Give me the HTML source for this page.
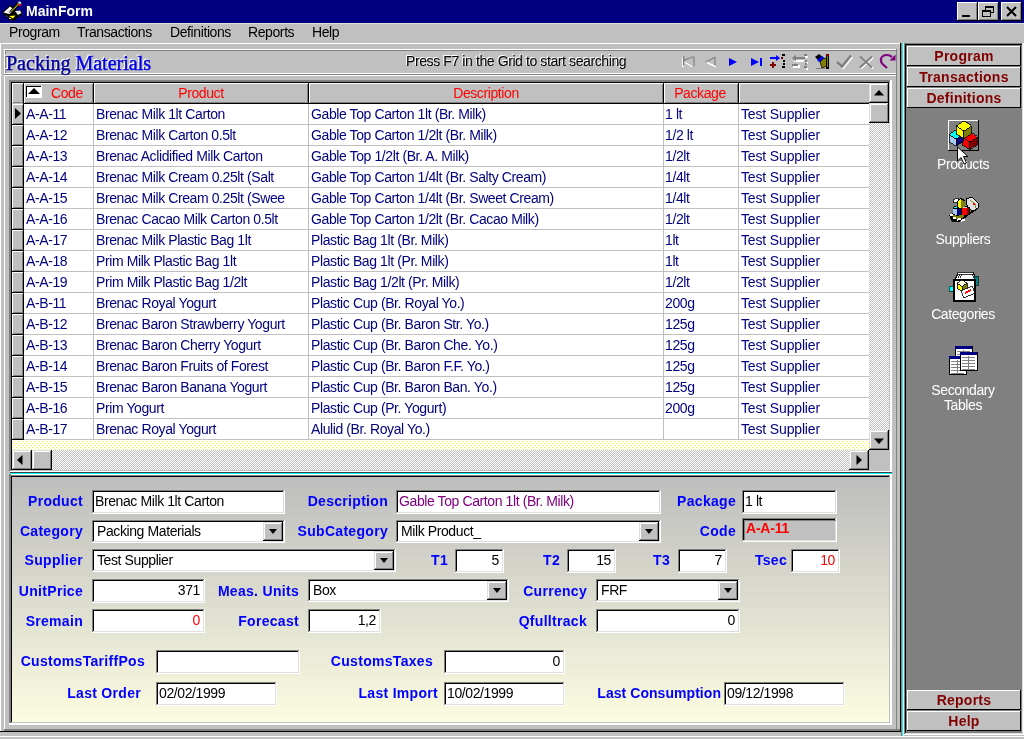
<!DOCTYPE html>
<html><head><meta charset="utf-8"><style>
html,body{margin:0;padding:0;width:1024px;height:739px;overflow:hidden;background:#c0c0c0;-webkit-font-smoothing:antialiased}
body>div{position:absolute}
.t{position:absolute;white-space:nowrap;font-family:"Liberation Sans",sans-serif;will-change:transform}
</style></head><body>
<div style="left:0px;top:0px;width:1024px;height:739px;background:#c0c0c0;"></div>
<div style="left:0px;top:0px;width:1024px;height:23px;background:#000080;"></div>
<div class="t " style="left:26px;top:4px;font-size:14px;line-height:14px;font-weight:bold;color:#fff;letter-spacing:0px;font-family:'Liberation Sans';">MainForm</div>
<div style="left:957px;top:2px;width:21px;height:19px;background:#c0c0c0;"></div>
<div style="left:957px;top:2px;width:21px;height:1px;background:#fff;"></div>
<div style="left:957px;top:2px;width:1px;height:19px;background:#fff;"></div>
<div style="left:957px;top:20px;width:21px;height:1px;background:#000;"></div>
<div style="left:977px;top:2px;width:1px;height:19px;background:#000;"></div>
<div style="left:958px;top:3px;width:19px;height:1px;background:#c0c0c0;"></div>
<div style="left:958px;top:3px;width:1px;height:17px;background:#c0c0c0;"></div>
<div style="left:958px;top:19px;width:19px;height:1px;background:#808080;"></div>
<div style="left:976px;top:3px;width:1px;height:17px;background:#808080;"></div>
<div style="left:978px;top:2px;width:21px;height:19px;background:#c0c0c0;"></div>
<div style="left:978px;top:2px;width:21px;height:1px;background:#fff;"></div>
<div style="left:978px;top:2px;width:1px;height:19px;background:#fff;"></div>
<div style="left:978px;top:20px;width:21px;height:1px;background:#000;"></div>
<div style="left:998px;top:2px;width:1px;height:19px;background:#000;"></div>
<div style="left:979px;top:3px;width:19px;height:1px;background:#c0c0c0;"></div>
<div style="left:979px;top:3px;width:1px;height:17px;background:#c0c0c0;"></div>
<div style="left:979px;top:19px;width:19px;height:1px;background:#808080;"></div>
<div style="left:997px;top:3px;width:1px;height:17px;background:#808080;"></div>
<div style="left:1001px;top:2px;width:21px;height:19px;background:#c0c0c0;"></div>
<div style="left:1001px;top:2px;width:21px;height:1px;background:#fff;"></div>
<div style="left:1001px;top:2px;width:1px;height:19px;background:#fff;"></div>
<div style="left:1001px;top:20px;width:21px;height:1px;background:#000;"></div>
<div style="left:1021px;top:2px;width:1px;height:19px;background:#000;"></div>
<div style="left:1002px;top:3px;width:19px;height:1px;background:#c0c0c0;"></div>
<div style="left:1002px;top:3px;width:1px;height:17px;background:#c0c0c0;"></div>
<div style="left:1002px;top:19px;width:19px;height:1px;background:#808080;"></div>
<div style="left:1020px;top:3px;width:1px;height:17px;background:#808080;"></div>
<div style="left:962px;top:15px;width:8px;height:2px;background:#000;"></div>
<div style="left:985px;top:6px;width:8px;height:6px;border:1px solid #000;border-top-width:2px;box-sizing:border-box;width:9px;height:7px"></div>
<div style="left:982px;top:10px;width:9px;height:7px;border:1px solid #000;border-top-width:2px;box-sizing:border-box;background:#c0c0c0"></div>
<svg style="position:absolute;left:1006px;top:6px" width="12" height="11" viewBox="0 0 12 11" shape-rendering="crispEdges"><path d="M1 1 L10 10 M10 1 L1 10" stroke="#000" stroke-width="2" shape-rendering="auto"/></svg>
<div style="left:0px;top:23px;width:1024px;height:1px;background:#dfdfdf;"></div>
<div class="t " style="left:9px;top:25px;font-size:14px;line-height:14px;font-weight:normal;color:#000;letter-spacing:-0.4px;font-family:'Liberation Sans';">Program</div>
<div class="t " style="left:77px;top:25px;font-size:14px;line-height:14px;font-weight:normal;color:#000;letter-spacing:-0.4px;font-family:'Liberation Sans';">Transactions</div>
<div class="t " style="left:170px;top:25px;font-size:14px;line-height:14px;font-weight:normal;color:#000;letter-spacing:-0.4px;font-family:'Liberation Sans';">Definitions</div>
<div class="t " style="left:248px;top:25px;font-size:14px;line-height:14px;font-weight:normal;color:#000;letter-spacing:-0.4px;font-family:'Liberation Sans';">Reports</div>
<div class="t " style="left:312px;top:25px;font-size:14px;line-height:14px;font-weight:normal;color:#000;letter-spacing:-0.4px;font-family:'Liberation Sans';">Help</div>
<div style="left:0px;top:43px;width:900px;height:1px;background:#fff;"></div>
<div style="left:0px;top:43px;width:1px;height:688px;background:#fff;"></div>
<div style="left:4px;top:49px;width:1px;height:680px;background:#fff;"></div>
<div style="left:4px;top:49px;width:893px;height:1px;background:#fff;"></div>
<div style="left:5px;top:50px;width:891px;height:1px;background:#808080;"></div>
<div style="left:5px;top:50px;width:1px;height:23px;background:#808080;"></div>
<div style="left:4px;top:73px;width:893px;height:1px;background:#fff;"></div>
<div style="left:4px;top:74px;width:893px;height:1px;background:#808080;"></div>
<div style="left:4px;top:75px;width:892px;height:1px;background:#fff;"></div>
<div style="left:896px;top:49px;width:1px;height:681px;background:#808080;"></div>
<div style="left:4px;top:729px;width:897px;height:1px;background:#808080;"></div>
<div style="left:4px;top:730px;width:897px;height:1px;background:#808080;"></div>
<div style="left:0px;top:731px;width:901px;height:1px;background:#000;"></div>
<div style="left:0px;top:736px;width:1024px;height:1px;background:#fff;"></div>
<div style="left:900px;top:43px;width:1px;height:689px;background:#000;"></div>
<div style="left:901px;top:43px;width:1px;height:693px;background:#808080;"></div>
<div style="left:902px;top:43px;width:1px;height:693px;background:#00ffff;"></div>
<div style="left:903px;top:43px;width:1px;height:693px;background:#fff;"></div>
<div class="t" style="left:5px;top:51px;font-family:'Liberation Serif';font-size:20px;line-height:22px;letter-spacing:0px;color:#fff;-webkit-text-stroke:0.4px #fff">Packing Materials</div>
<div class="t" style="left:6px;top:52px;font-family:'Liberation Serif';font-size:20px;line-height:22px;letter-spacing:0px;"><span style="color:#00009c;-webkit-text-stroke:0.45px #00009c">Packing </span><span style="color:#0000e4;-webkit-text-stroke:0.45px #0000e4">Materials</span></div>
<div class="t " style="left:406px;top:54px;font-size:14px;line-height:14px;font-weight:normal;color:#000;letter-spacing:-0.4px;font-family:'Liberation Sans';text-shadow:-1px -1px 0 #fff;">Press F7 in the Grid to start searching</div>
<div style="left:9px;top:80px;width:882px;height:2px;background:#808080;"></div>
<div style="left:9px;top:80px;width:2px;height:391px;background:#808080;"></div>
<div style="left:11px;top:82px;width:878px;height:1px;background:#000;"></div>
<div style="left:11px;top:82px;width:1px;height:388px;background:#000;"></div>
<div style="left:889px;top:82px;width:1px;height:389px;background:#c0c0c0;"></div>
<div style="left:890px;top:80px;width:2px;height:391px;background:#fff;"></div>
<div style="left:11px;top:470px;width:879px;height:1px;background:#c0c0c0;"></div>
<div style="left:12px;top:83px;width:877px;height:387px;background:#fff;"></div>
<div style="left:12px;top:83px;width:857px;height:20px;background:#c0c0c0;"></div>
<div style="left:12px;top:103px;width:857px;height:1px;background:#000;"></div>
<div style="left:12px;top:83px;width:11px;height:357px;background:#c0c0c0;"></div>
<div style="left:23px;top:83px;width:1px;height:357px;background:#000;"></div>
<div style="left:12px;top:104px;width:11px;height:1px;background:#fff;"></div>
<div style="left:12px;top:104px;width:1px;height:20px;background:#fff;"></div>
<div style="left:13px;top:123px;width:10px;height:1px;background:#808080;"></div>
<div style="left:22px;top:105px;width:1px;height:19px;background:#808080;"></div>
<div style="left:12px;top:124px;width:12px;height:1px;background:#000;"></div>
<div style="left:12px;top:125px;width:11px;height:1px;background:#fff;"></div>
<div style="left:12px;top:125px;width:1px;height:20px;background:#fff;"></div>
<div style="left:13px;top:144px;width:10px;height:1px;background:#808080;"></div>
<div style="left:22px;top:126px;width:1px;height:19px;background:#808080;"></div>
<div style="left:12px;top:145px;width:12px;height:1px;background:#000;"></div>
<div style="left:12px;top:146px;width:11px;height:1px;background:#fff;"></div>
<div style="left:12px;top:146px;width:1px;height:20px;background:#fff;"></div>
<div style="left:13px;top:165px;width:10px;height:1px;background:#808080;"></div>
<div style="left:22px;top:147px;width:1px;height:19px;background:#808080;"></div>
<div style="left:12px;top:166px;width:12px;height:1px;background:#000;"></div>
<div style="left:12px;top:167px;width:11px;height:1px;background:#fff;"></div>
<div style="left:12px;top:167px;width:1px;height:20px;background:#fff;"></div>
<div style="left:13px;top:186px;width:10px;height:1px;background:#808080;"></div>
<div style="left:22px;top:168px;width:1px;height:19px;background:#808080;"></div>
<div style="left:12px;top:187px;width:12px;height:1px;background:#000;"></div>
<div style="left:12px;top:188px;width:11px;height:1px;background:#fff;"></div>
<div style="left:12px;top:188px;width:1px;height:20px;background:#fff;"></div>
<div style="left:13px;top:207px;width:10px;height:1px;background:#808080;"></div>
<div style="left:22px;top:189px;width:1px;height:19px;background:#808080;"></div>
<div style="left:12px;top:208px;width:12px;height:1px;background:#000;"></div>
<div style="left:12px;top:209px;width:11px;height:1px;background:#fff;"></div>
<div style="left:12px;top:209px;width:1px;height:20px;background:#fff;"></div>
<div style="left:13px;top:228px;width:10px;height:1px;background:#808080;"></div>
<div style="left:22px;top:210px;width:1px;height:19px;background:#808080;"></div>
<div style="left:12px;top:229px;width:12px;height:1px;background:#000;"></div>
<div style="left:12px;top:230px;width:11px;height:1px;background:#fff;"></div>
<div style="left:12px;top:230px;width:1px;height:20px;background:#fff;"></div>
<div style="left:13px;top:249px;width:10px;height:1px;background:#808080;"></div>
<div style="left:22px;top:231px;width:1px;height:19px;background:#808080;"></div>
<div style="left:12px;top:250px;width:12px;height:1px;background:#000;"></div>
<div style="left:12px;top:251px;width:11px;height:1px;background:#fff;"></div>
<div style="left:12px;top:251px;width:1px;height:20px;background:#fff;"></div>
<div style="left:13px;top:270px;width:10px;height:1px;background:#808080;"></div>
<div style="left:22px;top:252px;width:1px;height:19px;background:#808080;"></div>
<div style="left:12px;top:271px;width:12px;height:1px;background:#000;"></div>
<div style="left:12px;top:272px;width:11px;height:1px;background:#fff;"></div>
<div style="left:12px;top:272px;width:1px;height:20px;background:#fff;"></div>
<div style="left:13px;top:291px;width:10px;height:1px;background:#808080;"></div>
<div style="left:22px;top:273px;width:1px;height:19px;background:#808080;"></div>
<div style="left:12px;top:292px;width:12px;height:1px;background:#000;"></div>
<div style="left:12px;top:293px;width:11px;height:1px;background:#fff;"></div>
<div style="left:12px;top:293px;width:1px;height:20px;background:#fff;"></div>
<div style="left:13px;top:312px;width:10px;height:1px;background:#808080;"></div>
<div style="left:22px;top:294px;width:1px;height:19px;background:#808080;"></div>
<div style="left:12px;top:313px;width:12px;height:1px;background:#000;"></div>
<div style="left:12px;top:314px;width:11px;height:1px;background:#fff;"></div>
<div style="left:12px;top:314px;width:1px;height:20px;background:#fff;"></div>
<div style="left:13px;top:333px;width:10px;height:1px;background:#808080;"></div>
<div style="left:22px;top:315px;width:1px;height:19px;background:#808080;"></div>
<div style="left:12px;top:334px;width:12px;height:1px;background:#000;"></div>
<div style="left:12px;top:335px;width:11px;height:1px;background:#fff;"></div>
<div style="left:12px;top:335px;width:1px;height:20px;background:#fff;"></div>
<div style="left:13px;top:354px;width:10px;height:1px;background:#808080;"></div>
<div style="left:22px;top:336px;width:1px;height:19px;background:#808080;"></div>
<div style="left:12px;top:355px;width:12px;height:1px;background:#000;"></div>
<div style="left:12px;top:356px;width:11px;height:1px;background:#fff;"></div>
<div style="left:12px;top:356px;width:1px;height:20px;background:#fff;"></div>
<div style="left:13px;top:375px;width:10px;height:1px;background:#808080;"></div>
<div style="left:22px;top:357px;width:1px;height:19px;background:#808080;"></div>
<div style="left:12px;top:376px;width:12px;height:1px;background:#000;"></div>
<div style="left:12px;top:377px;width:11px;height:1px;background:#fff;"></div>
<div style="left:12px;top:377px;width:1px;height:20px;background:#fff;"></div>
<div style="left:13px;top:396px;width:10px;height:1px;background:#808080;"></div>
<div style="left:22px;top:378px;width:1px;height:19px;background:#808080;"></div>
<div style="left:12px;top:397px;width:12px;height:1px;background:#000;"></div>
<div style="left:12px;top:398px;width:11px;height:1px;background:#fff;"></div>
<div style="left:12px;top:398px;width:1px;height:20px;background:#fff;"></div>
<div style="left:13px;top:417px;width:10px;height:1px;background:#808080;"></div>
<div style="left:22px;top:399px;width:1px;height:19px;background:#808080;"></div>
<div style="left:12px;top:418px;width:12px;height:1px;background:#000;"></div>
<div style="left:12px;top:419px;width:11px;height:1px;background:#fff;"></div>
<div style="left:12px;top:419px;width:1px;height:20px;background:#fff;"></div>
<div style="left:13px;top:438px;width:10px;height:1px;background:#808080;"></div>
<div style="left:22px;top:420px;width:1px;height:19px;background:#808080;"></div>
<div style="left:12px;top:439px;width:12px;height:1px;background:#000;"></div>
<div style="left:12px;top:83px;width:11px;height:1px;background:#fff;"></div>
<div style="left:12px;top:83px;width:1px;height:20px;background:#fff;"></div>
<div style="left:13px;top:102px;width:10px;height:1px;background:#808080;"></div>
<div style="left:22px;top:84px;width:1px;height:19px;background:#808080;"></div>
<div style="left:24px;top:83px;width:69px;height:1px;background:#fff;"></div>
<div style="left:24px;top:83px;width:1px;height:20px;background:#fff;"></div>
<div style="left:25px;top:102px;width:68px;height:1px;background:#808080;"></div>
<div style="left:92px;top:84px;width:1px;height:19px;background:#808080;"></div>
<div style="left:93px;top:83px;width:1px;height:21px;background:#000;"></div>
<div style="left:94px;top:83px;width:214px;height:1px;background:#fff;"></div>
<div style="left:94px;top:83px;width:1px;height:20px;background:#fff;"></div>
<div style="left:95px;top:102px;width:213px;height:1px;background:#808080;"></div>
<div style="left:307px;top:84px;width:1px;height:19px;background:#808080;"></div>
<div style="left:308px;top:83px;width:1px;height:21px;background:#000;"></div>
<div style="left:309px;top:83px;width:354px;height:1px;background:#fff;"></div>
<div style="left:309px;top:83px;width:1px;height:20px;background:#fff;"></div>
<div style="left:310px;top:102px;width:353px;height:1px;background:#808080;"></div>
<div style="left:662px;top:84px;width:1px;height:19px;background:#808080;"></div>
<div style="left:663px;top:83px;width:1px;height:21px;background:#000;"></div>
<div style="left:664px;top:83px;width:74px;height:1px;background:#fff;"></div>
<div style="left:664px;top:83px;width:1px;height:20px;background:#fff;"></div>
<div style="left:665px;top:102px;width:73px;height:1px;background:#808080;"></div>
<div style="left:737px;top:84px;width:1px;height:19px;background:#808080;"></div>
<div style="left:738px;top:83px;width:1px;height:21px;background:#000;"></div>
<div style="left:739px;top:83px;width:130px;height:1px;background:#fff;"></div>
<div style="left:739px;top:83px;width:1px;height:20px;background:#fff;"></div>
<div style="left:740px;top:102px;width:129px;height:1px;background:#808080;"></div>
<div style="left:93px;top:104px;width:1px;height:336px;background:#c0c0c0;"></div>
<div style="left:308px;top:104px;width:1px;height:336px;background:#c0c0c0;"></div>
<div style="left:663px;top:104px;width:1px;height:336px;background:#c0c0c0;"></div>
<div style="left:738px;top:104px;width:1px;height:336px;background:#c0c0c0;"></div>
<div style="left:24px;top:124px;width:845px;height:1px;background:#c0c0c0;"></div>
<div style="left:24px;top:145px;width:845px;height:1px;background:#c0c0c0;"></div>
<div style="left:24px;top:166px;width:845px;height:1px;background:#c0c0c0;"></div>
<div style="left:24px;top:187px;width:845px;height:1px;background:#c0c0c0;"></div>
<div style="left:24px;top:208px;width:845px;height:1px;background:#c0c0c0;"></div>
<div style="left:24px;top:229px;width:845px;height:1px;background:#c0c0c0;"></div>
<div style="left:24px;top:250px;width:845px;height:1px;background:#c0c0c0;"></div>
<div style="left:24px;top:271px;width:845px;height:1px;background:#c0c0c0;"></div>
<div style="left:24px;top:292px;width:845px;height:1px;background:#c0c0c0;"></div>
<div style="left:24px;top:313px;width:845px;height:1px;background:#c0c0c0;"></div>
<div style="left:24px;top:334px;width:845px;height:1px;background:#c0c0c0;"></div>
<div style="left:24px;top:355px;width:845px;height:1px;background:#c0c0c0;"></div>
<div style="left:24px;top:376px;width:845px;height:1px;background:#c0c0c0;"></div>
<div style="left:24px;top:397px;width:845px;height:1px;background:#c0c0c0;"></div>
<div style="left:24px;top:418px;width:845px;height:1px;background:#c0c0c0;"></div>
<div style="left:24px;top:439px;width:845px;height:1px;background:#c0c0c0;"></div>
<div style="left:26px;top:86px;width:16px;height:12px;background:#fff;"></div>
<div style="left:26px;top:86px;width:15px;height:1px;background:#000;"></div>
<div style="left:26px;top:86px;width:1px;height:11px;background:#000;"></div>
<svg style="position:absolute;left:28px;top:88px" width="12" height="6" viewBox="0 0 12 6" shape-rendering="crispEdges"><path d="M6 0 L12 6 L0 6 Z" fill="#000" shape-rendering="auto"/></svg>
<div class="t " style="left:51px;top:86px;font-size:14px;line-height:14px;font-weight:normal;color:#ff0000;letter-spacing:-0.4px;font-family:'Liberation Sans';">Code</div>
<div class="t" style="left:1px;width:400px;text-align:center;top:86px;font-size:14px;line-height:14px;font-weight:normal;color:#ff0000;letter-spacing:-0.4px;">Product</div>
<div class="t" style="left:286px;width:400px;text-align:center;top:86px;font-size:14px;line-height:14px;font-weight:normal;color:#ff0000;letter-spacing:-0.4px;">Description</div>
<div class="t" style="left:500px;width:400px;text-align:center;top:86px;font-size:14px;line-height:14px;font-weight:normal;color:#ff0000;letter-spacing:-0.4px;">Package</div>
<svg style="position:absolute;left:15px;top:108px" width="6" height="11" viewBox="0 0 6 11" shape-rendering="crispEdges"><path d="M0 0 L6 5.5 L0 11 Z" fill="#000" shape-rendering="auto"/></svg>
<div class="t " style="left:26px;top:107px;font-size:14px;line-height:14px;font-weight:normal;color:#000080;letter-spacing:-0.4px;font-family:'Liberation Sans';">A-A-11</div>
<div class="t" style="left:96px;top:107px;width:211px;height:18px;overflow:hidden;font-size:14px;line-height:14px;color:#000080;letter-spacing:-0.4px">Brenac Milk 1lt Carton</div>
<div class="t " style="left:311px;top:107px;font-size:14px;line-height:14px;font-weight:normal;color:#000080;letter-spacing:-0.4px;font-family:'Liberation Sans';">Gable Top Carton 1lt (Br. Milk)</div>
<div class="t " style="left:665px;top:107px;font-size:14px;line-height:14px;font-weight:normal;color:#000080;letter-spacing:-0.4px;font-family:'Liberation Sans';">1 lt</div>
<div class="t " style="left:741px;top:107px;font-size:14px;line-height:14px;font-weight:normal;color:#000080;letter-spacing:-0.15px;font-family:'Liberation Sans';">Test Supplier</div>
<div class="t " style="left:26px;top:128px;font-size:14px;line-height:14px;font-weight:normal;color:#000080;letter-spacing:-0.4px;font-family:'Liberation Sans';">A-A-12</div>
<div class="t" style="left:96px;top:128px;width:211px;height:18px;overflow:hidden;font-size:14px;line-height:14px;color:#000080;letter-spacing:-0.4px">Brenac Milk Carton 0.5lt</div>
<div class="t " style="left:311px;top:128px;font-size:14px;line-height:14px;font-weight:normal;color:#000080;letter-spacing:-0.4px;font-family:'Liberation Sans';">Gable Top Carton 1/2lt (Br. Milk)</div>
<div class="t " style="left:665px;top:128px;font-size:14px;line-height:14px;font-weight:normal;color:#000080;letter-spacing:-0.4px;font-family:'Liberation Sans';">1/2 lt</div>
<div class="t " style="left:741px;top:128px;font-size:14px;line-height:14px;font-weight:normal;color:#000080;letter-spacing:-0.15px;font-family:'Liberation Sans';">Test Supplier</div>
<div class="t " style="left:26px;top:149px;font-size:14px;line-height:14px;font-weight:normal;color:#000080;letter-spacing:-0.4px;font-family:'Liberation Sans';">A-A-13</div>
<div class="t" style="left:96px;top:149px;width:211px;height:18px;overflow:hidden;font-size:14px;line-height:14px;color:#000080;letter-spacing:-0.4px">Brenac Aclidified Milk Carton</div>
<div class="t " style="left:311px;top:149px;font-size:14px;line-height:14px;font-weight:normal;color:#000080;letter-spacing:-0.4px;font-family:'Liberation Sans';">Gable Top 1/2lt (Br. A. Milk)</div>
<div class="t " style="left:665px;top:149px;font-size:14px;line-height:14px;font-weight:normal;color:#000080;letter-spacing:-0.4px;font-family:'Liberation Sans';">1/2lt</div>
<div class="t " style="left:741px;top:149px;font-size:14px;line-height:14px;font-weight:normal;color:#000080;letter-spacing:-0.15px;font-family:'Liberation Sans';">Test Supplier</div>
<div class="t " style="left:26px;top:170px;font-size:14px;line-height:14px;font-weight:normal;color:#000080;letter-spacing:-0.4px;font-family:'Liberation Sans';">A-A-14</div>
<div class="t" style="left:96px;top:170px;width:211px;height:18px;overflow:hidden;font-size:14px;line-height:14px;color:#000080;letter-spacing:-0.4px">Brenac Milk Cream 0.25lt (Salt</div>
<div class="t " style="left:311px;top:170px;font-size:14px;line-height:14px;font-weight:normal;color:#000080;letter-spacing:-0.4px;font-family:'Liberation Sans';">Gable Top Carton 1/4lt (Br. Salty Cream)</div>
<div class="t " style="left:665px;top:170px;font-size:14px;line-height:14px;font-weight:normal;color:#000080;letter-spacing:-0.4px;font-family:'Liberation Sans';">1/4lt</div>
<div class="t " style="left:741px;top:170px;font-size:14px;line-height:14px;font-weight:normal;color:#000080;letter-spacing:-0.15px;font-family:'Liberation Sans';">Test Supplier</div>
<div class="t " style="left:26px;top:191px;font-size:14px;line-height:14px;font-weight:normal;color:#000080;letter-spacing:-0.4px;font-family:'Liberation Sans';">A-A-15</div>
<div class="t" style="left:96px;top:191px;width:211px;height:18px;overflow:hidden;font-size:14px;line-height:14px;color:#000080;letter-spacing:-0.4px">Brenac Milk Cream 0.25lt (Swee</div>
<div class="t " style="left:311px;top:191px;font-size:14px;line-height:14px;font-weight:normal;color:#000080;letter-spacing:-0.4px;font-family:'Liberation Sans';">Gable Top Carton 1/4lt (Br. Sweet Cream)</div>
<div class="t " style="left:665px;top:191px;font-size:14px;line-height:14px;font-weight:normal;color:#000080;letter-spacing:-0.4px;font-family:'Liberation Sans';">1/4lt</div>
<div class="t " style="left:741px;top:191px;font-size:14px;line-height:14px;font-weight:normal;color:#000080;letter-spacing:-0.15px;font-family:'Liberation Sans';">Test Supplier</div>
<div class="t " style="left:26px;top:212px;font-size:14px;line-height:14px;font-weight:normal;color:#000080;letter-spacing:-0.4px;font-family:'Liberation Sans';">A-A-16</div>
<div class="t" style="left:96px;top:212px;width:211px;height:18px;overflow:hidden;font-size:14px;line-height:14px;color:#000080;letter-spacing:-0.4px">Brenac Cacao Milk Carton 0.5lt</div>
<div class="t " style="left:311px;top:212px;font-size:14px;line-height:14px;font-weight:normal;color:#000080;letter-spacing:-0.4px;font-family:'Liberation Sans';">Gable Top Carton 1/2lt (Br. Cacao Milk)</div>
<div class="t " style="left:665px;top:212px;font-size:14px;line-height:14px;font-weight:normal;color:#000080;letter-spacing:-0.4px;font-family:'Liberation Sans';">1/2lt</div>
<div class="t " style="left:741px;top:212px;font-size:14px;line-height:14px;font-weight:normal;color:#000080;letter-spacing:-0.15px;font-family:'Liberation Sans';">Test Supplier</div>
<div class="t " style="left:26px;top:233px;font-size:14px;line-height:14px;font-weight:normal;color:#000080;letter-spacing:-0.4px;font-family:'Liberation Sans';">A-A-17</div>
<div class="t" style="left:96px;top:233px;width:211px;height:18px;overflow:hidden;font-size:14px;line-height:14px;color:#000080;letter-spacing:-0.4px">Brenac Milk Plastic Bag 1lt</div>
<div class="t " style="left:311px;top:233px;font-size:14px;line-height:14px;font-weight:normal;color:#000080;letter-spacing:-0.4px;font-family:'Liberation Sans';">Plastic Bag 1lt (Br. Milk)</div>
<div class="t " style="left:665px;top:233px;font-size:14px;line-height:14px;font-weight:normal;color:#000080;letter-spacing:-0.4px;font-family:'Liberation Sans';">1lt</div>
<div class="t " style="left:741px;top:233px;font-size:14px;line-height:14px;font-weight:normal;color:#000080;letter-spacing:-0.15px;font-family:'Liberation Sans';">Test Supplier</div>
<div class="t " style="left:26px;top:254px;font-size:14px;line-height:14px;font-weight:normal;color:#000080;letter-spacing:-0.4px;font-family:'Liberation Sans';">A-A-18</div>
<div class="t" style="left:96px;top:254px;width:211px;height:18px;overflow:hidden;font-size:14px;line-height:14px;color:#000080;letter-spacing:-0.4px">Prim Milk Plastic Bag 1lt</div>
<div class="t " style="left:311px;top:254px;font-size:14px;line-height:14px;font-weight:normal;color:#000080;letter-spacing:-0.4px;font-family:'Liberation Sans';">Plastic Bag 1lt (Pr. Milk)</div>
<div class="t " style="left:665px;top:254px;font-size:14px;line-height:14px;font-weight:normal;color:#000080;letter-spacing:-0.4px;font-family:'Liberation Sans';">1lt</div>
<div class="t " style="left:741px;top:254px;font-size:14px;line-height:14px;font-weight:normal;color:#000080;letter-spacing:-0.15px;font-family:'Liberation Sans';">Test Supplier</div>
<div class="t " style="left:26px;top:275px;font-size:14px;line-height:14px;font-weight:normal;color:#000080;letter-spacing:-0.4px;font-family:'Liberation Sans';">A-A-19</div>
<div class="t" style="left:96px;top:275px;width:211px;height:18px;overflow:hidden;font-size:14px;line-height:14px;color:#000080;letter-spacing:-0.4px">Prim Milk Plastic Bag 1/2lt</div>
<div class="t " style="left:311px;top:275px;font-size:14px;line-height:14px;font-weight:normal;color:#000080;letter-spacing:-0.4px;font-family:'Liberation Sans';">Plastic Bag 1/2lt (Pr. Milk)</div>
<div class="t " style="left:665px;top:275px;font-size:14px;line-height:14px;font-weight:normal;color:#000080;letter-spacing:-0.4px;font-family:'Liberation Sans';">1/2lt</div>
<div class="t " style="left:741px;top:275px;font-size:14px;line-height:14px;font-weight:normal;color:#000080;letter-spacing:-0.15px;font-family:'Liberation Sans';">Test Supplier</div>
<div class="t " style="left:26px;top:296px;font-size:14px;line-height:14px;font-weight:normal;color:#000080;letter-spacing:-0.4px;font-family:'Liberation Sans';">A-B-11</div>
<div class="t" style="left:96px;top:296px;width:211px;height:18px;overflow:hidden;font-size:14px;line-height:14px;color:#000080;letter-spacing:-0.4px">Brenac Royal Yogurt</div>
<div class="t " style="left:311px;top:296px;font-size:14px;line-height:14px;font-weight:normal;color:#000080;letter-spacing:-0.4px;font-family:'Liberation Sans';">Plastic Cup (Br. Royal Yo.)</div>
<div class="t " style="left:665px;top:296px;font-size:14px;line-height:14px;font-weight:normal;color:#000080;letter-spacing:-0.4px;font-family:'Liberation Sans';">200g</div>
<div class="t " style="left:741px;top:296px;font-size:14px;line-height:14px;font-weight:normal;color:#000080;letter-spacing:-0.15px;font-family:'Liberation Sans';">Test Supplier</div>
<div class="t " style="left:26px;top:317px;font-size:14px;line-height:14px;font-weight:normal;color:#000080;letter-spacing:-0.4px;font-family:'Liberation Sans';">A-B-12</div>
<div class="t" style="left:96px;top:317px;width:211px;height:18px;overflow:hidden;font-size:14px;line-height:14px;color:#000080;letter-spacing:-0.4px">Brenac Baron Strawberry Yogurt</div>
<div class="t " style="left:311px;top:317px;font-size:14px;line-height:14px;font-weight:normal;color:#000080;letter-spacing:-0.4px;font-family:'Liberation Sans';">Plastic Cup (Br. Baron Str. Yo.)</div>
<div class="t " style="left:665px;top:317px;font-size:14px;line-height:14px;font-weight:normal;color:#000080;letter-spacing:-0.4px;font-family:'Liberation Sans';">125g</div>
<div class="t " style="left:741px;top:317px;font-size:14px;line-height:14px;font-weight:normal;color:#000080;letter-spacing:-0.15px;font-family:'Liberation Sans';">Test Supplier</div>
<div class="t " style="left:26px;top:338px;font-size:14px;line-height:14px;font-weight:normal;color:#000080;letter-spacing:-0.4px;font-family:'Liberation Sans';">A-B-13</div>
<div class="t" style="left:96px;top:338px;width:211px;height:18px;overflow:hidden;font-size:14px;line-height:14px;color:#000080;letter-spacing:-0.4px">Brenac Baron Cherry Yogurt</div>
<div class="t " style="left:311px;top:338px;font-size:14px;line-height:14px;font-weight:normal;color:#000080;letter-spacing:-0.4px;font-family:'Liberation Sans';">Plastic Cup (Br. Baron Che. Yo.)</div>
<div class="t " style="left:665px;top:338px;font-size:14px;line-height:14px;font-weight:normal;color:#000080;letter-spacing:-0.4px;font-family:'Liberation Sans';">125g</div>
<div class="t " style="left:741px;top:338px;font-size:14px;line-height:14px;font-weight:normal;color:#000080;letter-spacing:-0.15px;font-family:'Liberation Sans';">Test Supplier</div>
<div class="t " style="left:26px;top:359px;font-size:14px;line-height:14px;font-weight:normal;color:#000080;letter-spacing:-0.4px;font-family:'Liberation Sans';">A-B-14</div>
<div class="t" style="left:96px;top:359px;width:211px;height:18px;overflow:hidden;font-size:14px;line-height:14px;color:#000080;letter-spacing:-0.4px">Brenac Baron Fruits of Forest</div>
<div class="t " style="left:311px;top:359px;font-size:14px;line-height:14px;font-weight:normal;color:#000080;letter-spacing:-0.4px;font-family:'Liberation Sans';">Plastic Cup (Br. Baron F.F. Yo.)</div>
<div class="t " style="left:665px;top:359px;font-size:14px;line-height:14px;font-weight:normal;color:#000080;letter-spacing:-0.4px;font-family:'Liberation Sans';">125g</div>
<div class="t " style="left:741px;top:359px;font-size:14px;line-height:14px;font-weight:normal;color:#000080;letter-spacing:-0.15px;font-family:'Liberation Sans';">Test Supplier</div>
<div class="t " style="left:26px;top:380px;font-size:14px;line-height:14px;font-weight:normal;color:#000080;letter-spacing:-0.4px;font-family:'Liberation Sans';">A-B-15</div>
<div class="t" style="left:96px;top:380px;width:211px;height:18px;overflow:hidden;font-size:14px;line-height:14px;color:#000080;letter-spacing:-0.4px">Brenac Baron Banana Yogurt</div>
<div class="t " style="left:311px;top:380px;font-size:14px;line-height:14px;font-weight:normal;color:#000080;letter-spacing:-0.4px;font-family:'Liberation Sans';">Plastic Cup (Br. Baron Ban. Yo.)</div>
<div class="t " style="left:665px;top:380px;font-size:14px;line-height:14px;font-weight:normal;color:#000080;letter-spacing:-0.4px;font-family:'Liberation Sans';">125g</div>
<div class="t " style="left:741px;top:380px;font-size:14px;line-height:14px;font-weight:normal;color:#000080;letter-spacing:-0.15px;font-family:'Liberation Sans';">Test Supplier</div>
<div class="t " style="left:26px;top:401px;font-size:14px;line-height:14px;font-weight:normal;color:#000080;letter-spacing:-0.4px;font-family:'Liberation Sans';">A-B-16</div>
<div class="t" style="left:96px;top:401px;width:211px;height:18px;overflow:hidden;font-size:14px;line-height:14px;color:#000080;letter-spacing:-0.4px">Prim Yogurt</div>
<div class="t " style="left:311px;top:401px;font-size:14px;line-height:14px;font-weight:normal;color:#000080;letter-spacing:-0.4px;font-family:'Liberation Sans';">Plastic Cup (Pr. Yogurt)</div>
<div class="t " style="left:665px;top:401px;font-size:14px;line-height:14px;font-weight:normal;color:#000080;letter-spacing:-0.4px;font-family:'Liberation Sans';">200g</div>
<div class="t " style="left:741px;top:401px;font-size:14px;line-height:14px;font-weight:normal;color:#000080;letter-spacing:-0.15px;font-family:'Liberation Sans';">Test Supplier</div>
<div class="t " style="left:26px;top:422px;font-size:14px;line-height:14px;font-weight:normal;color:#000080;letter-spacing:-0.4px;font-family:'Liberation Sans';">A-B-17</div>
<div class="t" style="left:96px;top:422px;width:211px;height:18px;overflow:hidden;font-size:14px;line-height:14px;color:#000080;letter-spacing:-0.4px">Brenac Royal Yogurt</div>
<div class="t " style="left:311px;top:422px;font-size:14px;line-height:14px;font-weight:normal;color:#000080;letter-spacing:-0.4px;font-family:'Liberation Sans';">Alulid (Br. Royal Yo.)</div>
<div class="t " style="left:741px;top:422px;font-size:14px;line-height:14px;font-weight:normal;color:#000080;letter-spacing:-0.15px;font-family:'Liberation Sans';">Test Supplier</div>
<svg style="position:absolute;left:12px;top:440px" width="857" height="10" viewBox="0 0 857 10" shape-rendering="crispEdges"><defs><pattern id="yd" width="4" height="4" patternUnits="userSpaceOnUse"><rect width="4" height="4" fill="#fff"/><rect x="2" y="1" width="1" height="1" fill="#ffff00"/><rect x="0" y="3" width="1" height="1" fill="#ffff00"/></pattern></defs><rect width="857" height="10" fill="url(#yd)"/></svg>
<svg style="position:absolute;left:869px;top:83px" width="20" height="367" viewBox="0 0 20 367" shape-rendering="crispEdges"><defs><pattern id="dt" width="2" height="2" patternUnits="userSpaceOnUse"><rect width="2" height="2" fill="#c0c0c0"/><rect x="0" y="0" width="1" height="1" fill="#fff"/><rect x="1" y="1" width="1" height="1" fill="#fff"/></pattern></defs><rect width="20" height="367" fill="url(#dt)"/></svg>
<div style="left:869px;top:83px;width:20px;height:20px;background:#c0c0c0;"></div>
<div style="left:869px;top:83px;width:20px;height:1px;background:#dfdfdf;"></div>
<div style="left:869px;top:83px;width:1px;height:20px;background:#dfdfdf;"></div>
<div style="left:869px;top:102px;width:20px;height:1px;background:#000;"></div>
<div style="left:888px;top:83px;width:1px;height:20px;background:#000;"></div>
<div style="left:870px;top:84px;width:18px;height:1px;background:#fff;"></div>
<div style="left:870px;top:84px;width:1px;height:18px;background:#fff;"></div>
<div style="left:870px;top:101px;width:18px;height:1px;background:#808080;"></div>
<div style="left:887px;top:84px;width:1px;height:18px;background:#808080;"></div>
<svg style="position:absolute;left:874px;top:90px" width="10" height="6" viewBox="0 0 10 6" shape-rendering="crispEdges"><path d="M5 0 L10 5.5 L0 5.5 Z" fill="#000" shape-rendering="auto"/></svg>
<div style="left:869px;top:103px;width:20px;height:20px;background:#c0c0c0;"></div>
<div style="left:869px;top:103px;width:20px;height:1px;background:#dfdfdf;"></div>
<div style="left:869px;top:103px;width:1px;height:20px;background:#dfdfdf;"></div>
<div style="left:869px;top:122px;width:20px;height:1px;background:#000;"></div>
<div style="left:888px;top:103px;width:1px;height:20px;background:#000;"></div>
<div style="left:870px;top:104px;width:18px;height:1px;background:#fff;"></div>
<div style="left:870px;top:104px;width:1px;height:18px;background:#fff;"></div>
<div style="left:870px;top:121px;width:18px;height:1px;background:#808080;"></div>
<div style="left:887px;top:104px;width:1px;height:18px;background:#808080;"></div>
<div style="left:869px;top:430px;width:20px;height:20px;background:#c0c0c0;"></div>
<div style="left:869px;top:430px;width:20px;height:1px;background:#dfdfdf;"></div>
<div style="left:869px;top:430px;width:1px;height:20px;background:#dfdfdf;"></div>
<div style="left:869px;top:449px;width:20px;height:1px;background:#000;"></div>
<div style="left:888px;top:430px;width:1px;height:20px;background:#000;"></div>
<div style="left:870px;top:431px;width:18px;height:1px;background:#fff;"></div>
<div style="left:870px;top:431px;width:1px;height:18px;background:#fff;"></div>
<div style="left:870px;top:448px;width:18px;height:1px;background:#808080;"></div>
<div style="left:887px;top:431px;width:1px;height:18px;background:#808080;"></div>
<svg style="position:absolute;left:874px;top:438px" width="10" height="6" viewBox="0 0 10 6" shape-rendering="crispEdges"><path d="M0 0.5 L10 0.5 L5 6 Z" fill="#000" shape-rendering="auto"/></svg>
<svg style="position:absolute;left:12px;top:450px" width="857" height="20" viewBox="0 0 857 20" shape-rendering="crispEdges"><rect width="857" height="20" fill="url(#dt)"/></svg>
<div style="left:12px;top:450px;width:20px;height:20px;background:#c0c0c0;"></div>
<div style="left:12px;top:450px;width:20px;height:1px;background:#dfdfdf;"></div>
<div style="left:12px;top:450px;width:1px;height:20px;background:#dfdfdf;"></div>
<div style="left:12px;top:469px;width:20px;height:1px;background:#000;"></div>
<div style="left:31px;top:450px;width:1px;height:20px;background:#000;"></div>
<div style="left:13px;top:451px;width:18px;height:1px;background:#fff;"></div>
<div style="left:13px;top:451px;width:1px;height:18px;background:#fff;"></div>
<div style="left:13px;top:468px;width:18px;height:1px;background:#808080;"></div>
<div style="left:30px;top:451px;width:1px;height:18px;background:#808080;"></div>
<svg style="position:absolute;left:17px;top:455px" width="6" height="10" viewBox="0 0 6 10" shape-rendering="crispEdges"><path d="M0 5 L5.5 0 L5.5 10 Z" fill="#000" shape-rendering="auto"/></svg>
<div style="left:32px;top:450px;width:20px;height:20px;background:#c0c0c0;"></div>
<div style="left:32px;top:450px;width:20px;height:1px;background:#dfdfdf;"></div>
<div style="left:32px;top:450px;width:1px;height:20px;background:#dfdfdf;"></div>
<div style="left:32px;top:469px;width:20px;height:1px;background:#000;"></div>
<div style="left:51px;top:450px;width:1px;height:20px;background:#000;"></div>
<div style="left:33px;top:451px;width:18px;height:1px;background:#fff;"></div>
<div style="left:33px;top:451px;width:1px;height:18px;background:#fff;"></div>
<div style="left:33px;top:468px;width:18px;height:1px;background:#808080;"></div>
<div style="left:50px;top:451px;width:1px;height:18px;background:#808080;"></div>
<div style="left:849px;top:450px;width:20px;height:20px;background:#c0c0c0;"></div>
<div style="left:849px;top:450px;width:20px;height:1px;background:#dfdfdf;"></div>
<div style="left:849px;top:450px;width:1px;height:20px;background:#dfdfdf;"></div>
<div style="left:849px;top:469px;width:20px;height:1px;background:#000;"></div>
<div style="left:868px;top:450px;width:1px;height:20px;background:#000;"></div>
<div style="left:850px;top:451px;width:18px;height:1px;background:#fff;"></div>
<div style="left:850px;top:451px;width:1px;height:18px;background:#fff;"></div>
<div style="left:850px;top:468px;width:18px;height:1px;background:#808080;"></div>
<div style="left:867px;top:451px;width:1px;height:18px;background:#808080;"></div>
<svg style="position:absolute;left:856px;top:455px" width="6" height="10" viewBox="0 0 6 10" shape-rendering="crispEdges"><path d="M0.5 0 L6 5 L0.5 10 Z" fill="#000" shape-rendering="auto"/></svg>
<div style="left:869px;top:450px;width:20px;height:20px;background:#c0c0c0;"></div>
<div style="left:10px;top:471px;width:882px;height:1px;background:#fff;"></div>
<div style="left:10px;top:472px;width:882px;height:1px;background:#404040;"></div>
<div style="left:10px;top:473px;width:882px;height:1px;background:#00ffff;"></div>
<div style="left:10px;top:474px;width:882px;height:1px;background:#fff;"></div>
<div style="left:9px;top:475px;width:882px;height:1px;background:#808080;"></div>
<div style="left:12px;top:477px;width:877px;height:10px;background:rgb(190,190,190);"></div>
<div style="left:12px;top:487px;width:877px;height:10px;background:rgb(193,193,191);"></div>
<div style="left:12px;top:497px;width:877px;height:10px;background:rgb(195,195,193);"></div>
<div style="left:12px;top:507px;width:877px;height:10px;background:rgb(198,198,194);"></div>
<div style="left:12px;top:517px;width:877px;height:10px;background:rgb(200,200,196);"></div>
<div style="left:12px;top:527px;width:877px;height:10px;background:rgb(203,203,197);"></div>
<div style="left:12px;top:537px;width:877px;height:10px;background:rgb(206,206,198);"></div>
<div style="left:12px;top:547px;width:877px;height:10px;background:rgb(208,208,200);"></div>
<div style="left:12px;top:557px;width:877px;height:10px;background:rgb(211,211,201);"></div>
<div style="left:12px;top:567px;width:877px;height:10px;background:rgb(213,213,203);"></div>
<div style="left:12px;top:577px;width:877px;height:10px;background:rgb(216,216,204);"></div>
<div style="left:12px;top:587px;width:877px;height:10px;background:rgb(218,218,206);"></div>
<div style="left:12px;top:597px;width:877px;height:10px;background:rgb(221,221,207);"></div>
<div style="left:12px;top:607px;width:877px;height:10px;background:rgb(224,224,208);"></div>
<div style="left:12px;top:617px;width:877px;height:10px;background:rgb(226,226,210);"></div>
<div style="left:12px;top:627px;width:877px;height:10px;background:rgb(229,229,211);"></div>
<div style="left:12px;top:637px;width:877px;height:10px;background:rgb(231,231,213);"></div>
<div style="left:12px;top:647px;width:877px;height:10px;background:rgb(234,234,214);"></div>
<div style="left:12px;top:657px;width:877px;height:10px;background:rgb(236,236,216);"></div>
<div style="left:12px;top:667px;width:877px;height:10px;background:rgb(239,239,217);"></div>
<div style="left:12px;top:677px;width:877px;height:10px;background:rgb(242,242,218);"></div>
<div style="left:12px;top:687px;width:877px;height:10px;background:rgb(244,244,220);"></div>
<div style="left:12px;top:697px;width:877px;height:10px;background:rgb(247,247,221);"></div>
<div style="left:12px;top:707px;width:877px;height:10px;background:rgb(249,249,223);"></div>
<div style="left:12px;top:717px;width:877px;height:5px;background:rgb(252,252,224);"></div>
<div style="left:9px;top:474px;width:2px;height:249px;background:#808080;"></div>
<div style="left:11px;top:476px;width:878px;height:1px;background:#000;"></div>
<div style="left:11px;top:476px;width:1px;height:246px;background:#000;"></div>
<div style="left:889px;top:476px;width:1px;height:247px;background:#c0c0c0;"></div>
<div style="left:11px;top:722px;width:879px;height:1px;background:#c0c0c0;"></div>
<div style="left:890px;top:474px;width:2px;height:251px;background:#fff;"></div>
<div style="left:9px;top:723px;width:883px;height:2px;background:#fff;"></div>
<div class="t" style="left:-317px;width:400px;text-align:right;top:494px;font-size:14px;line-height:14px;font-weight:bold;color:#0000ff;letter-spacing:0.3px;">Product</div>
<div style="left:92px;top:490px;width:193px;height:24px;background:#fff;"></div>
<div style="left:92px;top:490px;width:193px;height:1px;background:#808080;"></div>
<div style="left:92px;top:490px;width:1px;height:24px;background:#808080;"></div>
<div style="left:92px;top:513px;width:193px;height:1px;background:#fff;"></div>
<div style="left:284px;top:490px;width:1px;height:24px;background:#fff;"></div>
<div style="left:93px;top:491px;width:191px;height:1px;background:#000;"></div>
<div style="left:93px;top:491px;width:1px;height:22px;background:#000;"></div>
<div style="left:93px;top:512px;width:191px;height:1px;background:#dfdfdf;"></div>
<div style="left:283px;top:491px;width:1px;height:22px;background:#dfdfdf;"></div>
<div class="t " style="left:95px;top:494px;font-size:14px;line-height:14px;font-weight:normal;color:#000;letter-spacing:-0.4px;font-family:'Liberation Sans';">Brenac Milk 1lt Carton</div>
<div class="t" style="left:-12px;width:400px;text-align:right;top:494px;font-size:14px;line-height:14px;font-weight:bold;color:#0000ff;letter-spacing:0.3px;">Description</div>
<div style="left:396px;top:490px;width:265px;height:24px;background:#fff;"></div>
<div style="left:396px;top:490px;width:265px;height:1px;background:#808080;"></div>
<div style="left:396px;top:490px;width:1px;height:24px;background:#808080;"></div>
<div style="left:396px;top:513px;width:265px;height:1px;background:#fff;"></div>
<div style="left:660px;top:490px;width:1px;height:24px;background:#fff;"></div>
<div style="left:397px;top:491px;width:263px;height:1px;background:#000;"></div>
<div style="left:397px;top:491px;width:1px;height:22px;background:#000;"></div>
<div style="left:397px;top:512px;width:263px;height:1px;background:#dfdfdf;"></div>
<div style="left:659px;top:491px;width:1px;height:22px;background:#dfdfdf;"></div>
<div class="t " style="left:399px;top:494px;font-size:14px;line-height:14px;font-weight:normal;color:#800080;letter-spacing:-0.4px;font-family:'Liberation Sans';">Gable Top Carton 1lt (Br. Milk)</div>
<div class="t" style="left:336px;width:400px;text-align:right;top:494px;font-size:14px;line-height:14px;font-weight:bold;color:#0000ff;letter-spacing:0.3px;">Package</div>
<div style="left:742px;top:490px;width:95px;height:24px;background:#fff;"></div>
<div style="left:742px;top:490px;width:95px;height:1px;background:#808080;"></div>
<div style="left:742px;top:490px;width:1px;height:24px;background:#808080;"></div>
<div style="left:742px;top:513px;width:95px;height:1px;background:#fff;"></div>
<div style="left:836px;top:490px;width:1px;height:24px;background:#fff;"></div>
<div style="left:743px;top:491px;width:93px;height:1px;background:#000;"></div>
<div style="left:743px;top:491px;width:1px;height:22px;background:#000;"></div>
<div style="left:743px;top:512px;width:93px;height:1px;background:#dfdfdf;"></div>
<div style="left:835px;top:491px;width:1px;height:22px;background:#dfdfdf;"></div>
<div class="t " style="left:745px;top:494px;font-size:14px;line-height:14px;font-weight:normal;color:#000;letter-spacing:-0.4px;font-family:'Liberation Sans';">1 lt</div>
<div class="t" style="left:-317px;width:400px;text-align:right;top:524px;font-size:14px;line-height:14px;font-weight:bold;color:#0000ff;letter-spacing:0.3px;">Category</div>
<div style="left:92px;top:520px;width:193px;height:23px;background:#fff;"></div>
<div style="left:92px;top:520px;width:193px;height:1px;background:#808080;"></div>
<div style="left:92px;top:520px;width:1px;height:23px;background:#808080;"></div>
<div style="left:92px;top:542px;width:193px;height:1px;background:#fff;"></div>
<div style="left:284px;top:520px;width:1px;height:23px;background:#fff;"></div>
<div style="left:93px;top:521px;width:191px;height:1px;background:#000;"></div>
<div style="left:93px;top:521px;width:1px;height:21px;background:#000;"></div>
<div style="left:93px;top:541px;width:191px;height:1px;background:#dfdfdf;"></div>
<div style="left:283px;top:521px;width:1px;height:21px;background:#dfdfdf;"></div>
<div style="left:263px;top:522px;width:20px;height:19px;background:#c0c0c0;"></div>
<div style="left:263px;top:522px;width:20px;height:1px;background:#dfdfdf;"></div>
<div style="left:263px;top:522px;width:1px;height:19px;background:#dfdfdf;"></div>
<div style="left:263px;top:540px;width:20px;height:1px;background:#000;"></div>
<div style="left:282px;top:522px;width:1px;height:19px;background:#000;"></div>
<div style="left:264px;top:523px;width:18px;height:1px;background:#fff;"></div>
<div style="left:264px;top:523px;width:1px;height:17px;background:#fff;"></div>
<div style="left:264px;top:539px;width:18px;height:1px;background:#808080;"></div>
<div style="left:281px;top:523px;width:1px;height:17px;background:#808080;"></div>
<div style="left:269px;top:529px;width:0;height:0;border-left:4px solid transparent;border-right:4px solid transparent;border-top:5px solid #000;"></div>
<div class="t " style="left:97px;top:524px;font-size:14px;line-height:14px;font-weight:normal;color:#000;letter-spacing:-0.4px;font-family:'Liberation Sans';">Packing Materials</div>
<div class="t" style="left:-12px;width:400px;text-align:right;top:524px;font-size:14px;line-height:14px;font-weight:bold;color:#0000ff;letter-spacing:0.3px;">SubCategory</div>
<div style="left:396px;top:520px;width:265px;height:23px;background:#fff;"></div>
<div style="left:396px;top:520px;width:265px;height:1px;background:#808080;"></div>
<div style="left:396px;top:520px;width:1px;height:23px;background:#808080;"></div>
<div style="left:396px;top:542px;width:265px;height:1px;background:#fff;"></div>
<div style="left:660px;top:520px;width:1px;height:23px;background:#fff;"></div>
<div style="left:397px;top:521px;width:263px;height:1px;background:#000;"></div>
<div style="left:397px;top:521px;width:1px;height:21px;background:#000;"></div>
<div style="left:397px;top:541px;width:263px;height:1px;background:#dfdfdf;"></div>
<div style="left:659px;top:521px;width:1px;height:21px;background:#dfdfdf;"></div>
<div style="left:639px;top:522px;width:20px;height:19px;background:#c0c0c0;"></div>
<div style="left:639px;top:522px;width:20px;height:1px;background:#dfdfdf;"></div>
<div style="left:639px;top:522px;width:1px;height:19px;background:#dfdfdf;"></div>
<div style="left:639px;top:540px;width:20px;height:1px;background:#000;"></div>
<div style="left:658px;top:522px;width:1px;height:19px;background:#000;"></div>
<div style="left:640px;top:523px;width:18px;height:1px;background:#fff;"></div>
<div style="left:640px;top:523px;width:1px;height:17px;background:#fff;"></div>
<div style="left:640px;top:539px;width:18px;height:1px;background:#808080;"></div>
<div style="left:657px;top:523px;width:1px;height:17px;background:#808080;"></div>
<div style="left:645px;top:529px;width:0;height:0;border-left:4px solid transparent;border-right:4px solid transparent;border-top:5px solid #000;"></div>
<div class="t " style="left:401px;top:524px;font-size:14px;line-height:14px;font-weight:normal;color:#000;letter-spacing:-0.4px;font-family:'Liberation Sans';">Milk Product_</div>
<div class="t" style="left:336px;width:400px;text-align:right;top:524px;font-size:14px;line-height:14px;font-weight:bold;color:#0000ff;letter-spacing:0.3px;">Code</div>
<div style="left:742px;top:518px;width:95px;height:24px;background:#c0c0c0;"></div>
<div style="left:742px;top:518px;width:95px;height:1px;background:#808080;"></div>
<div style="left:742px;top:518px;width:1px;height:24px;background:#808080;"></div>
<div style="left:742px;top:541px;width:95px;height:1px;background:#fff;"></div>
<div style="left:836px;top:518px;width:1px;height:24px;background:#fff;"></div>
<div style="left:743px;top:519px;width:93px;height:1px;background:#000;"></div>
<div style="left:743px;top:519px;width:1px;height:22px;background:#000;"></div>
<div style="left:743px;top:540px;width:93px;height:1px;background:#dfdfdf;"></div>
<div style="left:835px;top:519px;width:1px;height:22px;background:#dfdfdf;"></div>
<div style="left:744px;top:520px;width:1px;height:20px;background:#808080;"></div>
<div style="left:744px;top:520px;width:92px;height:1px;background:#808080;"></div>
<div class="t " style="left:746px;top:521px;font-size:14px;line-height:14px;font-weight:bold;color:#ff0000;letter-spacing:-0.2px;font-family:'Liberation Sans';">A-A-11</div>
<div class="t" style="left:-317px;width:400px;text-align:right;top:553px;font-size:14px;line-height:14px;font-weight:bold;color:#0000ff;letter-spacing:0.3px;">Supplier</div>
<div style="left:92px;top:549px;width:304px;height:23px;background:#fff;"></div>
<div style="left:92px;top:549px;width:304px;height:1px;background:#808080;"></div>
<div style="left:92px;top:549px;width:1px;height:23px;background:#808080;"></div>
<div style="left:92px;top:571px;width:304px;height:1px;background:#fff;"></div>
<div style="left:395px;top:549px;width:1px;height:23px;background:#fff;"></div>
<div style="left:93px;top:550px;width:302px;height:1px;background:#000;"></div>
<div style="left:93px;top:550px;width:1px;height:21px;background:#000;"></div>
<div style="left:93px;top:570px;width:302px;height:1px;background:#dfdfdf;"></div>
<div style="left:394px;top:550px;width:1px;height:21px;background:#dfdfdf;"></div>
<div style="left:374px;top:551px;width:20px;height:19px;background:#c0c0c0;"></div>
<div style="left:374px;top:551px;width:20px;height:1px;background:#dfdfdf;"></div>
<div style="left:374px;top:551px;width:1px;height:19px;background:#dfdfdf;"></div>
<div style="left:374px;top:569px;width:20px;height:1px;background:#000;"></div>
<div style="left:393px;top:551px;width:1px;height:19px;background:#000;"></div>
<div style="left:375px;top:552px;width:18px;height:1px;background:#fff;"></div>
<div style="left:375px;top:552px;width:1px;height:17px;background:#fff;"></div>
<div style="left:375px;top:568px;width:18px;height:1px;background:#808080;"></div>
<div style="left:392px;top:552px;width:1px;height:17px;background:#808080;"></div>
<div style="left:380px;top:558px;width:0;height:0;border-left:4px solid transparent;border-right:4px solid transparent;border-top:5px solid #000;"></div>
<div class="t " style="left:97px;top:553px;font-size:14px;line-height:14px;font-weight:normal;color:#000;letter-spacing:-0.4px;font-family:'Liberation Sans';">Test Supplier</div>
<div class="t" style="left:48px;width:400px;text-align:right;top:553px;font-size:14px;line-height:14px;font-weight:bold;color:#0000ff;letter-spacing:0.3px;">T1</div>
<div style="left:455px;top:549px;width:49px;height:24px;background:#fff;"></div>
<div style="left:455px;top:549px;width:49px;height:1px;background:#808080;"></div>
<div style="left:455px;top:549px;width:1px;height:24px;background:#808080;"></div>
<div style="left:455px;top:572px;width:49px;height:1px;background:#fff;"></div>
<div style="left:503px;top:549px;width:1px;height:24px;background:#fff;"></div>
<div style="left:456px;top:550px;width:47px;height:1px;background:#000;"></div>
<div style="left:456px;top:550px;width:1px;height:22px;background:#000;"></div>
<div style="left:456px;top:571px;width:47px;height:1px;background:#dfdfdf;"></div>
<div style="left:502px;top:550px;width:1px;height:22px;background:#dfdfdf;"></div>
<div class="t" style="left:99px;width:400px;text-align:right;top:553px;font-size:14px;line-height:14px;font-weight:normal;color:#000;letter-spacing:-0.4px;">5</div>
<div class="t" style="left:160px;width:400px;text-align:right;top:553px;font-size:14px;line-height:14px;font-weight:bold;color:#0000ff;letter-spacing:0.3px;">T2</div>
<div style="left:567px;top:549px;width:49px;height:24px;background:#fff;"></div>
<div style="left:567px;top:549px;width:49px;height:1px;background:#808080;"></div>
<div style="left:567px;top:549px;width:1px;height:24px;background:#808080;"></div>
<div style="left:567px;top:572px;width:49px;height:1px;background:#fff;"></div>
<div style="left:615px;top:549px;width:1px;height:24px;background:#fff;"></div>
<div style="left:568px;top:550px;width:47px;height:1px;background:#000;"></div>
<div style="left:568px;top:550px;width:1px;height:22px;background:#000;"></div>
<div style="left:568px;top:571px;width:47px;height:1px;background:#dfdfdf;"></div>
<div style="left:614px;top:550px;width:1px;height:22px;background:#dfdfdf;"></div>
<div class="t" style="left:211px;width:400px;text-align:right;top:553px;font-size:14px;line-height:14px;font-weight:normal;color:#000;letter-spacing:-0.4px;">15</div>
<div class="t" style="left:270px;width:400px;text-align:right;top:553px;font-size:14px;line-height:14px;font-weight:bold;color:#0000ff;letter-spacing:0.3px;">T3</div>
<div style="left:678px;top:549px;width:49px;height:24px;background:#fff;"></div>
<div style="left:678px;top:549px;width:49px;height:1px;background:#808080;"></div>
<div style="left:678px;top:549px;width:1px;height:24px;background:#808080;"></div>
<div style="left:678px;top:572px;width:49px;height:1px;background:#fff;"></div>
<div style="left:726px;top:549px;width:1px;height:24px;background:#fff;"></div>
<div style="left:679px;top:550px;width:47px;height:1px;background:#000;"></div>
<div style="left:679px;top:550px;width:1px;height:22px;background:#000;"></div>
<div style="left:679px;top:571px;width:47px;height:1px;background:#dfdfdf;"></div>
<div style="left:725px;top:550px;width:1px;height:22px;background:#dfdfdf;"></div>
<div class="t" style="left:322px;width:400px;text-align:right;top:553px;font-size:14px;line-height:14px;font-weight:normal;color:#000;letter-spacing:-0.4px;">7</div>
<div class="t" style="left:387px;width:400px;text-align:right;top:553px;font-size:14px;line-height:14px;font-weight:bold;color:#0000ff;letter-spacing:0.3px;">Tsec</div>
<div style="left:791px;top:549px;width:49px;height:24px;background:#fff;"></div>
<div style="left:791px;top:549px;width:49px;height:1px;background:#808080;"></div>
<div style="left:791px;top:549px;width:1px;height:24px;background:#808080;"></div>
<div style="left:791px;top:572px;width:49px;height:1px;background:#fff;"></div>
<div style="left:839px;top:549px;width:1px;height:24px;background:#fff;"></div>
<div style="left:792px;top:550px;width:47px;height:1px;background:#000;"></div>
<div style="left:792px;top:550px;width:1px;height:22px;background:#000;"></div>
<div style="left:792px;top:571px;width:47px;height:1px;background:#dfdfdf;"></div>
<div style="left:838px;top:550px;width:1px;height:22px;background:#dfdfdf;"></div>
<div class="t" style="left:435px;width:400px;text-align:right;top:553px;font-size:14px;line-height:14px;font-weight:normal;color:#ff0000;letter-spacing:-0.4px;">10</div>
<div class="t" style="left:-317px;width:400px;text-align:right;top:584px;font-size:14px;line-height:14px;font-weight:bold;color:#0000ff;letter-spacing:0.3px;">UnitPrice</div>
<div style="left:92px;top:579px;width:113px;height:24px;background:#fff;"></div>
<div style="left:92px;top:579px;width:113px;height:1px;background:#808080;"></div>
<div style="left:92px;top:579px;width:1px;height:24px;background:#808080;"></div>
<div style="left:92px;top:602px;width:113px;height:1px;background:#fff;"></div>
<div style="left:204px;top:579px;width:1px;height:24px;background:#fff;"></div>
<div style="left:93px;top:580px;width:111px;height:1px;background:#000;"></div>
<div style="left:93px;top:580px;width:1px;height:22px;background:#000;"></div>
<div style="left:93px;top:601px;width:111px;height:1px;background:#dfdfdf;"></div>
<div style="left:203px;top:580px;width:1px;height:22px;background:#dfdfdf;"></div>
<div class="t" style="left:-200px;width:400px;text-align:right;top:583px;font-size:14px;line-height:14px;font-weight:normal;color:#000;letter-spacing:-0.4px;">371</div>
<div class="t" style="left:-101px;width:400px;text-align:right;top:584px;font-size:14px;line-height:14px;font-weight:bold;color:#0000ff;letter-spacing:0.3px;">Meas. Units</div>
<div style="left:308px;top:579px;width:201px;height:23px;background:#fff;"></div>
<div style="left:308px;top:579px;width:201px;height:1px;background:#808080;"></div>
<div style="left:308px;top:579px;width:1px;height:23px;background:#808080;"></div>
<div style="left:308px;top:601px;width:201px;height:1px;background:#fff;"></div>
<div style="left:508px;top:579px;width:1px;height:23px;background:#fff;"></div>
<div style="left:309px;top:580px;width:199px;height:1px;background:#000;"></div>
<div style="left:309px;top:580px;width:1px;height:21px;background:#000;"></div>
<div style="left:309px;top:600px;width:199px;height:1px;background:#dfdfdf;"></div>
<div style="left:507px;top:580px;width:1px;height:21px;background:#dfdfdf;"></div>
<div style="left:487px;top:581px;width:20px;height:19px;background:#c0c0c0;"></div>
<div style="left:487px;top:581px;width:20px;height:1px;background:#dfdfdf;"></div>
<div style="left:487px;top:581px;width:1px;height:19px;background:#dfdfdf;"></div>
<div style="left:487px;top:599px;width:20px;height:1px;background:#000;"></div>
<div style="left:506px;top:581px;width:1px;height:19px;background:#000;"></div>
<div style="left:488px;top:582px;width:18px;height:1px;background:#fff;"></div>
<div style="left:488px;top:582px;width:1px;height:17px;background:#fff;"></div>
<div style="left:488px;top:598px;width:18px;height:1px;background:#808080;"></div>
<div style="left:505px;top:582px;width:1px;height:17px;background:#808080;"></div>
<div style="left:493px;top:588px;width:0;height:0;border-left:4px solid transparent;border-right:4px solid transparent;border-top:5px solid #000;"></div>
<div class="t " style="left:313px;top:583px;font-size:14px;line-height:14px;font-weight:normal;color:#000;letter-spacing:-0.4px;font-family:'Liberation Sans';">Box</div>
<div class="t" style="left:187px;width:400px;text-align:right;top:584px;font-size:14px;line-height:14px;font-weight:bold;color:#0000ff;letter-spacing:0.3px;">Currency</div>
<div style="left:596px;top:579px;width:144px;height:23px;background:#fff;"></div>
<div style="left:596px;top:579px;width:144px;height:1px;background:#808080;"></div>
<div style="left:596px;top:579px;width:1px;height:23px;background:#808080;"></div>
<div style="left:596px;top:601px;width:144px;height:1px;background:#fff;"></div>
<div style="left:739px;top:579px;width:1px;height:23px;background:#fff;"></div>
<div style="left:597px;top:580px;width:142px;height:1px;background:#000;"></div>
<div style="left:597px;top:580px;width:1px;height:21px;background:#000;"></div>
<div style="left:597px;top:600px;width:142px;height:1px;background:#dfdfdf;"></div>
<div style="left:738px;top:580px;width:1px;height:21px;background:#dfdfdf;"></div>
<div style="left:718px;top:581px;width:20px;height:19px;background:#c0c0c0;"></div>
<div style="left:718px;top:581px;width:20px;height:1px;background:#dfdfdf;"></div>
<div style="left:718px;top:581px;width:1px;height:19px;background:#dfdfdf;"></div>
<div style="left:718px;top:599px;width:20px;height:1px;background:#000;"></div>
<div style="left:737px;top:581px;width:1px;height:19px;background:#000;"></div>
<div style="left:719px;top:582px;width:18px;height:1px;background:#fff;"></div>
<div style="left:719px;top:582px;width:1px;height:17px;background:#fff;"></div>
<div style="left:719px;top:598px;width:18px;height:1px;background:#808080;"></div>
<div style="left:736px;top:582px;width:1px;height:17px;background:#808080;"></div>
<div style="left:724px;top:588px;width:0;height:0;border-left:4px solid transparent;border-right:4px solid transparent;border-top:5px solid #000;"></div>
<div class="t " style="left:601px;top:583px;font-size:14px;line-height:14px;font-weight:normal;color:#000;letter-spacing:-0.4px;font-family:'Liberation Sans';">FRF</div>
<div class="t" style="left:-317px;width:400px;text-align:right;top:614px;font-size:14px;line-height:14px;font-weight:bold;color:#0000ff;letter-spacing:0.3px;">Sremain</div>
<div style="left:92px;top:609px;width:113px;height:24px;background:#fff;"></div>
<div style="left:92px;top:609px;width:113px;height:1px;background:#808080;"></div>
<div style="left:92px;top:609px;width:1px;height:24px;background:#808080;"></div>
<div style="left:92px;top:632px;width:113px;height:1px;background:#fff;"></div>
<div style="left:204px;top:609px;width:1px;height:24px;background:#fff;"></div>
<div style="left:93px;top:610px;width:111px;height:1px;background:#000;"></div>
<div style="left:93px;top:610px;width:1px;height:22px;background:#000;"></div>
<div style="left:93px;top:631px;width:111px;height:1px;background:#dfdfdf;"></div>
<div style="left:203px;top:610px;width:1px;height:22px;background:#dfdfdf;"></div>
<div class="t" style="left:-200px;width:400px;text-align:right;top:613px;font-size:14px;line-height:14px;font-weight:normal;color:#ff0000;letter-spacing:-0.4px;">0</div>
<div class="t" style="left:-101px;width:400px;text-align:right;top:614px;font-size:14px;line-height:14px;font-weight:bold;color:#0000ff;letter-spacing:0.3px;">Forecast</div>
<div style="left:308px;top:609px;width:73px;height:24px;background:#fff;"></div>
<div style="left:308px;top:609px;width:73px;height:1px;background:#808080;"></div>
<div style="left:308px;top:609px;width:1px;height:24px;background:#808080;"></div>
<div style="left:308px;top:632px;width:73px;height:1px;background:#fff;"></div>
<div style="left:380px;top:609px;width:1px;height:24px;background:#fff;"></div>
<div style="left:309px;top:610px;width:71px;height:1px;background:#000;"></div>
<div style="left:309px;top:610px;width:1px;height:22px;background:#000;"></div>
<div style="left:309px;top:631px;width:71px;height:1px;background:#dfdfdf;"></div>
<div style="left:379px;top:610px;width:1px;height:22px;background:#dfdfdf;"></div>
<div class="t" style="left:-24px;width:400px;text-align:right;top:613px;font-size:14px;line-height:14px;font-weight:normal;color:#000;letter-spacing:-0.4px;">1,2</div>
<div class="t" style="left:187px;width:400px;text-align:right;top:614px;font-size:14px;line-height:14px;font-weight:bold;color:#0000ff;letter-spacing:0.3px;">Qfulltrack</div>
<div style="left:596px;top:609px;width:144px;height:24px;background:#fff;"></div>
<div style="left:596px;top:609px;width:144px;height:1px;background:#808080;"></div>
<div style="left:596px;top:609px;width:1px;height:24px;background:#808080;"></div>
<div style="left:596px;top:632px;width:144px;height:1px;background:#fff;"></div>
<div style="left:739px;top:609px;width:1px;height:24px;background:#fff;"></div>
<div style="left:597px;top:610px;width:142px;height:1px;background:#000;"></div>
<div style="left:597px;top:610px;width:1px;height:22px;background:#000;"></div>
<div style="left:597px;top:631px;width:142px;height:1px;background:#dfdfdf;"></div>
<div style="left:738px;top:610px;width:1px;height:22px;background:#dfdfdf;"></div>
<div class="t" style="left:335px;width:400px;text-align:right;top:613px;font-size:14px;line-height:14px;font-weight:normal;color:#000;letter-spacing:-0.4px;">0</div>
<div class="t" style="left:-255px;width:400px;text-align:right;top:654px;font-size:14px;line-height:14px;font-weight:bold;color:#0000ff;letter-spacing:0.3px;">CustomsTariffPos</div>
<div style="left:156px;top:650px;width:144px;height:24px;background:#fff;"></div>
<div style="left:156px;top:650px;width:144px;height:1px;background:#808080;"></div>
<div style="left:156px;top:650px;width:1px;height:24px;background:#808080;"></div>
<div style="left:156px;top:673px;width:144px;height:1px;background:#fff;"></div>
<div style="left:299px;top:650px;width:1px;height:24px;background:#fff;"></div>
<div style="left:157px;top:651px;width:142px;height:1px;background:#000;"></div>
<div style="left:157px;top:651px;width:1px;height:22px;background:#000;"></div>
<div style="left:157px;top:672px;width:142px;height:1px;background:#dfdfdf;"></div>
<div style="left:298px;top:651px;width:1px;height:22px;background:#dfdfdf;"></div>
<div class="t" style="left:33px;width:400px;text-align:right;top:654px;font-size:14px;line-height:14px;font-weight:bold;color:#0000ff;letter-spacing:0.3px;">CustomsTaxes</div>
<div style="left:444px;top:650px;width:121px;height:24px;background:#fff;"></div>
<div style="left:444px;top:650px;width:121px;height:1px;background:#808080;"></div>
<div style="left:444px;top:650px;width:1px;height:24px;background:#808080;"></div>
<div style="left:444px;top:673px;width:121px;height:1px;background:#fff;"></div>
<div style="left:564px;top:650px;width:1px;height:24px;background:#fff;"></div>
<div style="left:445px;top:651px;width:119px;height:1px;background:#000;"></div>
<div style="left:445px;top:651px;width:1px;height:22px;background:#000;"></div>
<div style="left:445px;top:672px;width:119px;height:1px;background:#dfdfdf;"></div>
<div style="left:563px;top:651px;width:1px;height:22px;background:#dfdfdf;"></div>
<div class="t" style="left:160px;width:400px;text-align:right;top:654px;font-size:14px;line-height:14px;font-weight:normal;color:#000;letter-spacing:-0.4px;">0</div>
<div class="t" style="left:-259px;width:400px;text-align:right;top:686px;font-size:14px;line-height:14px;font-weight:bold;color:#0000ff;letter-spacing:0.3px;">Last Order</div>
<div style="left:156px;top:682px;width:121px;height:24px;background:#fff;"></div>
<div style="left:156px;top:682px;width:121px;height:1px;background:#808080;"></div>
<div style="left:156px;top:682px;width:1px;height:24px;background:#808080;"></div>
<div style="left:156px;top:705px;width:121px;height:1px;background:#fff;"></div>
<div style="left:276px;top:682px;width:1px;height:24px;background:#fff;"></div>
<div style="left:157px;top:683px;width:119px;height:1px;background:#000;"></div>
<div style="left:157px;top:683px;width:1px;height:22px;background:#000;"></div>
<div style="left:157px;top:704px;width:119px;height:1px;background:#dfdfdf;"></div>
<div style="left:275px;top:683px;width:1px;height:22px;background:#dfdfdf;"></div>
<div class="t " style="left:159px;top:686px;font-size:14px;line-height:14px;font-weight:normal;color:#000;letter-spacing:-0.4px;font-family:'Liberation Sans';">02/02/1999</div>
<div class="t" style="left:38px;width:400px;text-align:right;top:686px;font-size:14px;line-height:14px;font-weight:bold;color:#0000ff;letter-spacing:0.3px;">Last Import</div>
<div style="left:444px;top:682px;width:121px;height:24px;background:#fff;"></div>
<div style="left:444px;top:682px;width:121px;height:1px;background:#808080;"></div>
<div style="left:444px;top:682px;width:1px;height:24px;background:#808080;"></div>
<div style="left:444px;top:705px;width:121px;height:1px;background:#fff;"></div>
<div style="left:564px;top:682px;width:1px;height:24px;background:#fff;"></div>
<div style="left:445px;top:683px;width:119px;height:1px;background:#000;"></div>
<div style="left:445px;top:683px;width:1px;height:22px;background:#000;"></div>
<div style="left:445px;top:704px;width:119px;height:1px;background:#dfdfdf;"></div>
<div style="left:563px;top:683px;width:1px;height:22px;background:#dfdfdf;"></div>
<div class="t " style="left:447px;top:686px;font-size:14px;line-height:14px;font-weight:normal;color:#000;letter-spacing:-0.4px;font-family:'Liberation Sans';">10/02/1999</div>
<div class="t" style="left:321px;width:400px;text-align:right;top:686px;font-size:14px;line-height:14px;font-weight:bold;color:#0000ff;letter-spacing:0.05px;">Last Consumption</div>
<div style="left:724px;top:682px;width:121px;height:24px;background:#fff;"></div>
<div style="left:724px;top:682px;width:121px;height:1px;background:#808080;"></div>
<div style="left:724px;top:682px;width:1px;height:24px;background:#808080;"></div>
<div style="left:724px;top:705px;width:121px;height:1px;background:#fff;"></div>
<div style="left:844px;top:682px;width:1px;height:24px;background:#fff;"></div>
<div style="left:725px;top:683px;width:119px;height:1px;background:#000;"></div>
<div style="left:725px;top:683px;width:1px;height:22px;background:#000;"></div>
<div style="left:725px;top:704px;width:119px;height:1px;background:#dfdfdf;"></div>
<div style="left:843px;top:683px;width:1px;height:22px;background:#dfdfdf;"></div>
<div class="t " style="left:727px;top:686px;font-size:14px;line-height:14px;font-weight:normal;color:#000;letter-spacing:-0.4px;font-family:'Liberation Sans';">09/12/1998</div>
<div style="left:904px;top:43px;width:120px;height:692px;background:#808080;"></div>
<div style="left:905px;top:44px;width:117px;height:1px;background:#000;"></div>
<div style="left:905px;top:44px;width:1px;height:689px;background:#000;"></div>
<div style="left:1022px;top:43px;width:1px;height:691px;background:#dfdfdf;"></div>
<div style="left:1023px;top:43px;width:1px;height:692px;background:#fff;"></div>
<div style="left:905px;top:733px;width:118px;height:1px;background:#dfdfdf;"></div>
<div style="left:904px;top:734px;width:120px;height:1px;background:#fff;"></div>
<div style="left:904px;top:735px;width:120px;height:1px;background:#c0c0c0;"></div>
<div style="left:907px;top:46px;width:114px;height:20px;background:#c0c0c0;"></div>
<div style="left:907px;top:46px;width:114px;height:1px;background:#fff;"></div>
<div style="left:907px;top:46px;width:1px;height:20px;background:#fff;"></div>
<div style="left:907px;top:65px;width:114px;height:1px;background:#000;"></div>
<div style="left:1020px;top:46px;width:1px;height:20px;background:#000;"></div>
<div class="t" style="left:764px;width:400px;text-align:center;top:49px;font-size:14px;line-height:14px;font-weight:bold;color:#800000;letter-spacing:0.25px;">Program</div>
<div style="left:907px;top:67px;width:114px;height:20px;background:#c0c0c0;"></div>
<div style="left:907px;top:67px;width:114px;height:1px;background:#fff;"></div>
<div style="left:907px;top:67px;width:1px;height:20px;background:#fff;"></div>
<div style="left:907px;top:86px;width:114px;height:1px;background:#000;"></div>
<div style="left:1020px;top:67px;width:1px;height:20px;background:#000;"></div>
<div class="t" style="left:764px;width:400px;text-align:center;top:70px;font-size:14px;line-height:14px;font-weight:bold;color:#800000;letter-spacing:0.25px;">Transactions</div>
<div style="left:907px;top:88px;width:114px;height:20px;background:#c0c0c0;"></div>
<div style="left:907px;top:88px;width:114px;height:1px;background:#fff;"></div>
<div style="left:907px;top:88px;width:1px;height:20px;background:#fff;"></div>
<div style="left:907px;top:107px;width:114px;height:1px;background:#000;"></div>
<div style="left:1020px;top:88px;width:1px;height:20px;background:#000;"></div>
<div class="t" style="left:764px;width:400px;text-align:center;top:91px;font-size:14px;line-height:14px;font-weight:bold;color:#800000;letter-spacing:0.25px;">Definitions</div>
<div style="left:907px;top:690px;width:114px;height:20px;background:#c0c0c0;"></div>
<div style="left:907px;top:690px;width:114px;height:1px;background:#fff;"></div>
<div style="left:907px;top:690px;width:1px;height:20px;background:#fff;"></div>
<div style="left:907px;top:709px;width:114px;height:1px;background:#000;"></div>
<div style="left:1020px;top:690px;width:1px;height:20px;background:#000;"></div>
<div class="t" style="left:764px;width:400px;text-align:center;top:693px;font-size:14px;line-height:14px;font-weight:bold;color:#800000;letter-spacing:0.25px;">Reports</div>
<div style="left:907px;top:711px;width:114px;height:20px;background:#c0c0c0;"></div>
<div style="left:907px;top:711px;width:114px;height:1px;background:#fff;"></div>
<div style="left:907px;top:711px;width:1px;height:20px;background:#fff;"></div>
<div style="left:907px;top:730px;width:114px;height:1px;background:#000;"></div>
<div style="left:1020px;top:711px;width:1px;height:20px;background:#000;"></div>
<div class="t" style="left:764px;width:400px;text-align:center;top:714px;font-size:14px;line-height:14px;font-weight:bold;color:#800000;letter-spacing:0.25px;">Help</div>
<div class="t" style="left:763px;width:400px;text-align:center;top:157px;font-size:14px;line-height:14px;font-weight:normal;color:#fff;letter-spacing:-0.4px;">Products</div>
<div class="t" style="left:763px;width:400px;text-align:center;top:232px;font-size:14px;line-height:14px;font-weight:normal;color:#fff;letter-spacing:-0.4px;">Suppliers</div>
<div class="t" style="left:763px;width:400px;text-align:center;top:307px;font-size:14px;line-height:14px;font-weight:normal;color:#fff;letter-spacing:-0.4px;">Categories</div>
<div class="t" style="left:763px;width:400px;text-align:center;top:383px;font-size:14px;line-height:14px;font-weight:normal;color:#fff;letter-spacing:-0.4px;">Secondary</div>
<div class="t" style="left:763px;width:400px;text-align:center;top:398px;font-size:14px;line-height:14px;font-weight:normal;color:#fff;letter-spacing:-0.4px;">Tables</div>
<svg style="position:absolute;left:681px;top:56px" width="16" height="12" viewBox="0 0 16 12" shape-rendering="crispEdges"><path d="M2 1 H3 V4.5 L11 1 H13 V10" fill="none" stroke="#808080" stroke-width="1.2" shape-rendering="auto"/><path d="M1.5 1.5 V10.5 H3 M4 6.5 L11 10.5" fill="none" stroke="#fff" stroke-width="1.2" shape-rendering="auto"/><path d="M2.5 1 V9.5" stroke="#808080" stroke-width="1.2" shape-rendering="auto"/></svg>
<svg style="position:absolute;left:704px;top:56px" width="14" height="12" viewBox="0 0 14 12" shape-rendering="crispEdges"><path d="M2 6 L11 1.2 V10" fill="none" stroke="#808080" stroke-width="1.2" shape-rendering="auto"/><path d="M3 6.5 L12 10.8" fill="none" stroke="#fff" stroke-width="1.4" shape-rendering="auto"/></svg>
<svg style="position:absolute;left:729px;top:58px" width="8" height="8" viewBox="0 0 8 8" shape-rendering="crispEdges"><path d="M0 0 L8 4 L0 8 Z" fill="#0000ff" shape-rendering="auto"/></svg>
<svg style="position:absolute;left:751px;top:58px" width="11" height="8" viewBox="0 0 11 8" shape-rendering="crispEdges"><path d="M0 0 L8 4 L0 8 Z" fill="#0000ff" shape-rendering="auto"/><rect x="9" y="0" width="2" height="8" fill="#0000ff"/></svg>
<svg style="position:absolute;left:769px;top:53px" width="17" height="17" viewBox="0 0 17 17" shape-rendering="crispEdges"><rect x="1" y="4" width="8" height="2" fill="#0000ff"/><path d="M7 2 L11 5 L7 8 Z" fill="#0000ff" shape-rendering="auto"/><rect x="1" y="11" width="6" height="2" fill="#800000"/><rect x="3" y="9" width="2" height="6" fill="#800000"/><rect x="12" y="4" width="2" height="2" fill="#800000"/><rect x="13" y="1" width="3" height="2" fill="#000"/><rect x="14" y="7" width="2" height="2" fill="#000"/><rect x="14" y="10" width="2" height="2" fill="#000"/><rect x="13" y="13" width="3" height="2" fill="#000"/></svg>
<svg style="position:absolute;left:791px;top:53px" width="18" height="18" viewBox="0 0 18 18" shape-rendering="crispEdges"><rect x="3" y="7" width="10" height="2" fill="#fff"/><rect x="2" y="12" width="7" height="3" fill="#fff"/><rect x="2" y="4" width="10" height="2" fill="#808080"/><path d="M1 5 L5 1.5 V8.5 Z" fill="#808080" shape-rendering="auto"/><rect x="1" y="11" width="6" height="2" fill="#808080"/><rect x="14" y="3" width="3" height="2" fill="#fff"/><rect x="15" y="9" width="2" height="2" fill="#fff"/><rect x="15" y="15" width="2" height="2" fill="#fff"/><rect x="13" y="1" width="3" height="2" fill="#808080"/><rect x="12" y="4" width="2" height="2" fill="#808080"/><rect x="14" y="7" width="2" height="2" fill="#808080"/><rect x="14" y="10" width="2" height="2" fill="#808080"/><rect x="13" y="13" width="3" height="2" fill="#808080"/></svg>
<svg style="position:absolute;left:814px;top:53px" width="17" height="18" viewBox="0 0 17 18" shape-rendering="crispEdges"><path d="M1 4 L5 1 L10 5 L6 9 Z" fill="#000" shape-rendering="auto"/><path d="M3 7 L8 3 L10 5 L5 9 Z" fill="#0000ff" shape-rendering="auto"/><path d="M6 9 L10 5 L13 6 L13 13 L8 15 Z" fill="#808000" shape-rendering="auto"/><path d="M6 9 L10 5 L13 6 L13 13 L8 15 Z" fill="none" stroke="#000" stroke-width="0.8" shape-rendering="auto"/><rect x="12" y="2" width="3" height="14" fill="#000"/><rect x="13" y="3" width="1" height="11" fill="#808000"/><rect x="12" y="1" width="3" height="2" fill="#800000"/><rect x="2" y="15" width="9" height="1" fill="#808080"/></svg>
<svg style="position:absolute;left:835px;top:54px" width="19" height="17" viewBox="0 0 19 17" shape-rendering="crispEdges"><path d="M2 8 L7 12.5 L16 1.5" fill="none" stroke="#fff" stroke-width="2.6" transform="translate(1,1.3)" shape-rendering="auto"/><path d="M2 8 L7 12.5 L16 1.5" fill="none" stroke="#808080" stroke-width="2.6" shape-rendering="auto"/></svg>
<svg style="position:absolute;left:858px;top:55px" width="17" height="15" viewBox="0 0 17 15" shape-rendering="crispEdges"><path d="M2 1.5 L14 12.5 M14 1.5 L2 12.5" fill="none" stroke="#fff" stroke-width="2" transform="translate(1,1)" shape-rendering="auto"/><path d="M2 1.5 L14 12.5 M14 1.5 L2 12.5" fill="none" stroke="#808080" stroke-width="2" shape-rendering="auto"/></svg>
<svg style="position:absolute;left:879px;top:53px" width="18" height="17" viewBox="0 0 18 17" shape-rendering="crispEdges"><path d="M8 15 L4 11.5 Q1.5 9 2 6 Q3 2 8 2 Q11 2 13 4" fill="none" stroke="#800080" stroke-width="2.2" shape-rendering="auto"/><path d="M10.5 7.5 L16.5 7.5 L16.5 1.5 Z" fill="#800080" shape-rendering="auto"/></svg>
<svg style="position:absolute;left:0px;top:0px" width="24" height="23" viewBox="0 0 24 23" shape-rendering="crispEdges"><path d="M2 12.5 L10 5 L14 7.5 L14.5 10 L22 11 L22 15 L18 17 L14 21 L11 21 L3 14 Z" fill="#000" shape-rendering="auto"/><path d="M3.5 12.5 L10 6.5 L13 9 L12 12 L9 14 Z" fill="#fff" shape-rendering="auto"/><path d="M8 12 L12 9 L12 12 L10 13.5 Z" fill="#a0a0a0" shape-rendering="auto"/><path d="M15 11 L20 10.5 L21.5 13 L18 15 Z" fill="#e8e8e8" shape-rendering="auto"/><path d="M9 16 L15.5 15.5 L13 18.5 Z" fill="#ffff00" shape-rendering="auto"/><rect x="9" y="18" width="2" height="1" fill="#ffff00"/><path d="M11 12 L19 3" stroke="#000" stroke-width="3.2" shape-rendering="auto"/><path d="M11.5 11.2 L18.5 3.8" stroke="#ffff00" stroke-width="1.3" stroke-dasharray="1 0.6" shape-rendering="auto"/><path d="M17.5 2.5 L20 1 L21.5 3 L20 5 Z" fill="#c0c0c0" shape-rendering="auto"/><rect x="19" y="4" width="1.6" height="1.6" fill="#ff0000"/><path d="M6 15.5 L12 20" stroke="#c0c0c0" stroke-width="0.7" stroke-dasharray="1 1" shape-rendering="auto"/></svg>
<div style="left:948px;top:120px;width:31px;height:1px;background:#fff;"></div>
<div style="left:948px;top:120px;width:1px;height:31px;background:#fff;"></div>
<div style="left:948px;top:150px;width:31px;height:1px;background:#000;"></div>
<div style="left:978px;top:120px;width:1px;height:31px;background:#000;"></div>
<svg style="position:absolute;left:948px;top:120px" width="31" height="31" viewBox="0 0 31 31" shape-rendering="crispEdges"><path d="M14 17.0 L21.5 12 L29 17.0 L21.5 21.975 Z" fill="#ff0000" stroke="#000" stroke-width="0.8"/><path d="M14 17.0 L21.5 21.975 L21.5 29.25 L14 24.75 Z" fill="#ff0000" stroke="#000" stroke-width="0.8"/><path d="M21.5 21.975 L29 17.0 L29 24.75 L21.5 29.25 Z" fill="#800000" stroke="#000" stroke-width="0.8"/><path d="M1 14.666666666666668 L8.0 10 L15 14.666666666666668 L8.0 19.310000000000002 Z" fill="#00ffff" stroke="#000" stroke-width="0.8"/><path d="M1 14.666666666666668 L8.0 19.310000000000002 L8.0 26.099999999999998 L1 21.9 Z" fill="#a6caf0" stroke="#000" stroke-width="0.8"/><path d="M8.0 19.310000000000002 L15 14.666666666666668 L15 21.9 L8.0 26.099999999999998 Z" fill="#000080" stroke="#000" stroke-width="0.8"/><path d="M8 6.0 L15.5 1 L23 6.0 L15.5 10.975000000000001 Z" fill="#ffff00" stroke="#000" stroke-width="0.8"/><path d="M8 6.0 L15.5 10.975000000000001 L15.5 18.25 L8 13.75 Z" fill="#ffff00" stroke="#000" stroke-width="0.8"/><path d="M15.5 10.975000000000001 L23 6.0 L23 13.75 L15.5 18.25 Z" fill="#808000" stroke="#000" stroke-width="0.8"/></svg>
<svg style="position:absolute;left:956px;top:146px" width="14" height="22" viewBox="0 0 14 22" shape-rendering="crispEdges"><path d="M1.5 1 L1.5 15 L5 11.5 L8 18 L10.5 17 L7.5 10.5 L12 10.5 Z" fill="#fff" stroke="#000" stroke-width="1" shape-rendering="auto"/></svg>
<svg style="position:absolute;left:944px;top:190px" width="40" height="38" viewBox="0 0 40 38" shape-rendering="crispEdges"><path d="M5 25 L26 14 L34 17 L34 19 L15 32 L8 32 Z" fill="#000"/><path d="M8 26 L27 16 L32 18 L15 30 Z" fill="#808000"/><path d="M6 25.5 L9 24.5 M9 28.5 L12 27.5 M13 30 L17 28.5 M17 31 L21 29.5" stroke="#fff" stroke-width="2"/><path d="M22 9 L28 7 L34 13 L34 18 L29 21 L25 19 L22 13 Z" fill="#e0e0e0" stroke="#000" stroke-width="1"/><path d="M26 10 L31 14 L31 18" fill="none" stroke="#808000" stroke-width="0.8"/><rect x="29" y="13" width="1.5" height="1.5" fill="#ff0000"/><path d="M9 9.5 L14 8 L15 12 L10 13 Z" fill="#fff" stroke="#000" stroke-width="0.8"/><path d="M13 11 L16.5 7.5 L21 10 L21 17 L17 19 L13 17 Z" fill="#000"/><path d="M13.5 11.5 L16.5 8.5 L17 19 L13.5 17 Z" fill="#ffff00"/><path d="M17 10 L20.5 11 L20.5 17 L17 18.5 Z" fill="#808000"/><path d="M8.5 18 L11 16 L13 17 L17 18 L17 25 L13 26 L8.5 24.5 Z" fill="#000"/><path d="M9 18.5 L12.5 19 L12.5 25 L9 24 Z" fill="#a6caf0"/><path d="M12.5 19 L16.5 18.5 L16.5 24.5 L12.5 25 Z" fill="#000080"/><path d="M10 17.5 L12 16.5 L13.5 18 L11 18.5 Z" fill="#00ffff"/><path d="M17 18 L23 16 L25.5 17 L25.5 24 L22 26 L17 25 Z" fill="#000"/><path d="M17.5 18.5 L22.5 17.5 L22.5 25 L17.5 24.5 Z" fill="#ff0000"/><path d="M22.5 17.5 L25 17.5 L25 23.5 L22.5 25 Z" fill="#800000"/><path d="M19 18 L23 17" stroke="#fff" stroke-width="0.8"/></svg>
<svg style="position:absolute;left:948px;top:270px" width="32" height="32" viewBox="0 0 32 32" shape-rendering="crispEdges"><path d="M7 9 L10 3 L25 3 L27 6 L27 20 L7 20 Z" fill="#fff" stroke="#000" stroke-width="1"/><path d="M8 8 L11 2 M10 8 L13 2 M12 8 L15 2 M23 2 L26 8" stroke="#000" stroke-width="0.8"/><rect x="9" y="2" width="16" height="2" fill="#fff" stroke="#000" stroke-width="0.8"/><rect x="26" y="6" width="4" height="9" fill="#008080" stroke="#000" stroke-width="0.6"/><rect x="1" y="16" width="6" height="5" fill="#00ffff" stroke="#000" stroke-width="0.6"/><rect x="6" y="10" width="21" height="21" fill="#fff" stroke="#000" stroke-width="1.2"/><path d="M9 13.333333333333334 L14.0 10 L19 13.333333333333334 L14.0 16.65 Z" fill="#ffffe0" stroke="#000" stroke-width="0.8"/><path d="M9 13.333333333333334 L14.0 16.65 L14.0 21.5 L9 18.5 Z" fill="#ffff00" stroke="#000" stroke-width="0.8"/><path d="M14.0 16.65 L19 13.333333333333334 L19 18.5 L14.0 21.5 Z" fill="#808000" stroke="#000" stroke-width="0.8"/><path d="M13 21 L24 16 L27 23 L16 28 Z" fill="#fff" stroke="#000" stroke-width="0.8"/><path d="M17 23 L23 20" stroke="#ff0000" stroke-width="1.4"/></svg>
<svg style="position:absolute;left:948px;top:344px" width="32" height="32" viewBox="0 0 32 32" shape-rendering="crispEdges"><rect x="7" y="2" width="17" height="14" fill="#fff" stroke="#000" stroke-width="1"/><rect x="7" y="2" width="17" height="3" fill="#000080"/><rect x="9" y="7" width="13" height="1" fill="#808080"/><rect x="9" y="10" width="13" height="1" fill="#808080"/><rect x="9" y="13" width="13" height="1" fill="#808080"/><rect x="15" y="6" width="1" height="9" fill="#808080"/><rect x="1" y="12" width="17" height="18" fill="#fff" stroke="#000" stroke-width="1"/><rect x="1" y="12" width="17" height="3" fill="#000080"/><rect x="3" y="17" width="13" height="1" fill="#808080"/><rect x="3" y="20" width="13" height="1" fill="#808080"/><rect x="3" y="23" width="13" height="1" fill="#808080"/><rect x="3" y="26" width="13" height="1" fill="#808080"/><rect x="3" y="29" width="13" height="1" fill="#808080"/><rect x="9" y="16" width="1" height="13" fill="#808080"/><rect x="12" y="8" width="17" height="18" fill="#fff" stroke="#000" stroke-width="1"/><rect x="12" y="8" width="17" height="3" fill="#000080"/><rect x="14" y="13" width="13" height="1" fill="#808080"/><rect x="14" y="16" width="13" height="1" fill="#808080"/><rect x="14" y="19" width="13" height="1" fill="#808080"/><rect x="14" y="22" width="13" height="1" fill="#808080"/><rect x="14" y="25" width="13" height="1" fill="#808080"/><rect x="20" y="12" width="1" height="13" fill="#808080"/></svg>
</body></html>
